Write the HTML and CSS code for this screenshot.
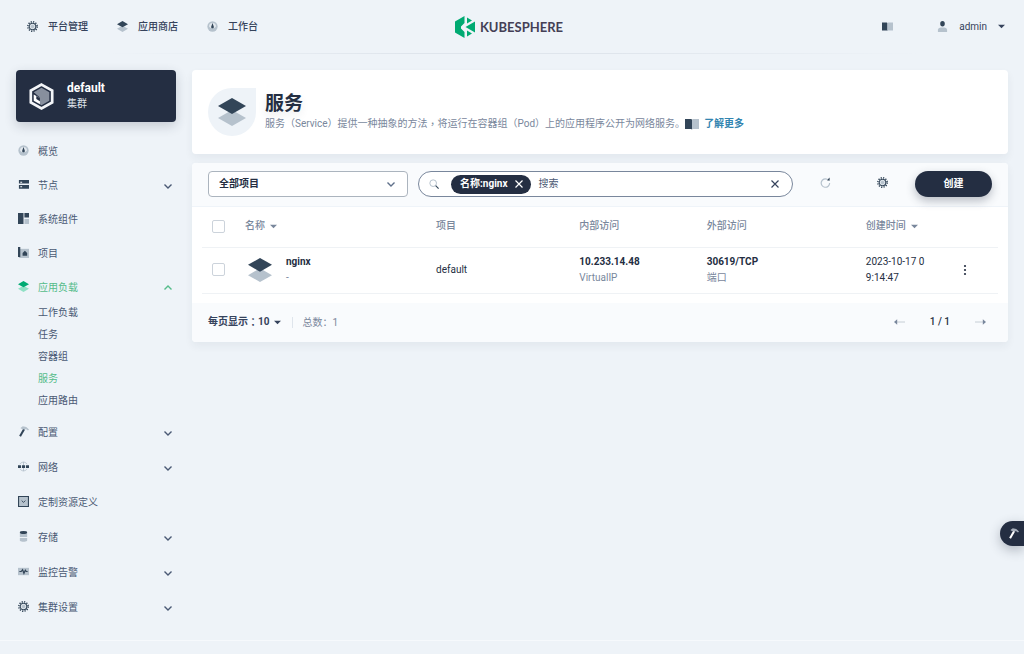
FILE: index.html
```html
<!DOCTYPE html>
<html lang="zh-CN">
<head>
<meta charset="utf-8">
<meta name="viewport" content="width=device-width, initial-scale=1">
<title>KubeSphere - 服务</title>
<link rel="stylesheet" href="styles.css">
</head>
<body>
<svg class="defs" aria-hidden="true">
  <symbol id="gear" viewBox="0 0 16 16"><circle cx="8" cy="8" r="6.8" fill="none" stroke="#324558" stroke-width="2.2" stroke-dasharray="1.8 1.76"/><circle cx="8" cy="8" r="4.800" fill="#dde4ea" stroke="#324558" stroke-width="1.600"/><circle cx="8" cy="8" r="2.400" fill="#b6c2cd"/></symbol>
  <symbol id="layers" viewBox="0 0 28 28"><path fill="var(--low, #b6c2cd)" d="M14 12l14 8-14 8-14-8z"/><path fill="var(--high, #324558)" d="M14 0l14 8-14 8-14-8z"/></symbol>
  <symbol id="dash" viewBox="0 0 16 16"><circle cx="8" cy="8" r="7.500" fill="#b6c2cd"/><path fill="#e3e9ef" d="M3 8a5 5 0 0 1 10 0l-2 2H5z"/><path fill="#324558" d="M8 3l1.700 4.500a2 2 0 1 1-3.400 0z"/></symbol>
  <symbol id="book" viewBox="0 0 14 12"><path fill="#324558" d="M0 1h6l1 .5v10L6 11H0z"/><path fill="#b6c2cd" d="M14 1H8l-1 .5v10l1-.5h6z"/></symbol>
  <symbol id="chevron" viewBox="0 0 10 10"><path d="M1.500 3.500L5 7l3.500-3.500" fill="none" stroke="currentColor" stroke-width="1.400"/></symbol>
  <symbol id="caret" viewBox="0 0 8 5"><path d="M0 0.500h8L4 4.500z" fill="currentColor"/></symbol>
  <symbol id="cross" viewBox="0 0 10 10"><path d="M1.500 1.500l7 7m0-7l-7 7" stroke="currentColor" stroke-width="1.200"/></symbol>
  <symbol id="hammer" viewBox="0 0 16 16"><path d="M3 15L9 4.500" stroke="var(--high, #324558)" stroke-width="3"/><path fill="var(--low, #b6c2cd)" d="M4 2.500L7 .5l5 1 4 3.500-1.500 1.500-3-2-2 1-5.500-2z"/></symbol>
</svg>

<header class="topbar">
  <nav class="topnav" aria-label="全局导航">
    <a href="#"><svg class="icon"><use href="#gear"/></svg>平台管理</a>
    <a href="#"><svg class="icon"><use href="#layers"/></svg>应用商店</a>
    <a href="#"><svg class="icon"><use href="#dash"/></svg>工作台</a>
  </nav>
  <a class="brand" href="#">
    <svg class="brand-mark" viewBox="0 0 20 22"><path fill="#00aa72" d="M9.500 0v7L6 10.500v2L9.500 16v6L0 16.500v-11zM12 1.500l5 3-5 3zM20 5.500v11L10.500 11zM12 14.500l5 3-5 3z"/></svg>
    <span>KUBESPHERE</span>
  </a>
  <div class="account">
    <a href="#" aria-label="文档"><svg class="icon"><use href="#book"/></svg></a>
    <button type="button" class="user"><svg class="icon" viewBox="0 0 12 12"><ellipse cx="6" cy="3" rx="2.500" ry="3" fill="#324558"/><path fill="#b6c2cd" d="M1 12V9.500C1 7.500 3 7 6 7s5 .5 5 2.500V12z"/></svg>admin<svg class="caret"><use href="#caret"/></svg></button>
  </div>
</header>

<div class="layout">
  <aside class="sidebar">
    <button type="button" class="cluster">
      <svg class="cluster-icon" viewBox="0 0 24 26"><path d="M12 1.500l10.300 5.800v11.400L12 24.500 1.700 18.700V7.300z" fill="none" stroke="#f3f5f8" stroke-width="2.600"/><path fill="#878f9d" d="M12 4.500l7.500 4.300v8.400L12 21.500l-1.500-1V14L4.500 9z"/><path fill="#fff" d="M4.500 11l6 3.500v6l-6-3.500z"/><path fill="#242e42" d="M7 12.500l3.500 2v3L7 15.500z"/></svg>
      <span><strong>default</strong><small>集群</small></span>
    </button>
    <nav aria-label="集群导航">
      <ul class="menu">
        <li><a href="#"><svg class="icon"><use href="#dash"/></svg><span>概览</span></a></li>
        <li><a href="#"><svg class="icon" viewBox="0 0 12 12"><path fill="#324558" d="M1 1h11v4H1zM1 6.500h11v4H1z"/><path fill="#fff" d="M2.500 3h2v1h-2zM2.500 8h2v1h-2z"/></svg><span>节点</span><svg class="chevron"><use href="#chevron"/></svg></a></li>
        <li><a href="#"><svg class="icon" viewBox="0 0 12 12"><path fill="#324558" d="M0 0h6v12H0zM7 0h5v5H7z"/><path fill="#b6c2cd" d="M7 6.500h5V12H7z"/></svg><span>系统组件</span></a></li>
        <li><a href="#"><svg class="icon" viewBox="0 0 12 12"><path fill="#b6c2cd" d="M1 2h11v10H1z"/><path fill="#324558" d="M0 0h2.500v11H0zM5 6.500L7.500 4 10 6.500V9.500H5z"/></svg><span>项目</span></a></li>
        <li class="open"><a href="#"><svg class="icon"><use href="#layers"/></svg><span>应用负载</span><svg class="chevron"><use href="#chevron"/></svg></a>
          <ul class="submenu">
            <li><a href="#">工作负载</a></li>
            <li><a href="#">任务</a></li>
            <li><a href="#">容器组</a></li>
            <li><a href="#" class="current" aria-current="page">服务</a></li>
            <li><a href="#">应用路由</a></li>
          </ul>
        </li>
      </ul>
      <ul class="menu menu-lower">
        <li><a href="#"><svg class="icon"><use href="#hammer"/></svg><span>配置</span><svg class="chevron"><use href="#chevron"/></svg></a></li>
        <li><a href="#"><svg class="icon" viewBox="0 0 12 12"><path fill="none" stroke="#b6c2cd" d="M2 3.500C4 .5 8 .5 10 3.500M2 8.500c2 3 6 3 8 0M6 1v10"/><path fill="#324558" d="M0 4.500h3.300v3H0zM4.300 4.500h3.400v3H4.300zM8.700 4.500H12v3H8.700z"/></svg><span>网络</span><svg class="chevron"><use href="#chevron"/></svg></a></li>
        <li><a href="#"><svg class="icon" viewBox="0 0 12 12"><path fill="#b6c2cd" stroke="#324558" stroke-width="1.200" d="M.6.6h10.800v10.800H.6z"/><path fill="none" stroke="#324558" d="M4 5l2 2 2-2"/></svg><span>定制资源定义</span></a></li>
        <li><a href="#"><svg class="icon" viewBox="0 0 12 12"><path fill="#b6c2cd" d="M2 2h8v4.500H2zM2 7.500h8v3c-2 1.500-6 1.500-8 0z"/><ellipse cx="6" cy="1.700" rx="4" ry="1.600" fill="#324558"/></svg><span>存储</span><svg class="chevron"><use href="#chevron"/></svg></a></li>
        <li><a href="#"><svg class="icon" viewBox="0 0 12 12"><path fill="#b6c2cd" d="M0 2h12v8H0z"/><path fill="none" stroke="#324558" stroke-width="1.300" d="M1.500 6h2L5 4l1.500 4L8 4.500 9 6h1.500"/></svg><span>监控告警</span><svg class="chevron"><use href="#chevron"/></svg></a></li>
        <li><a href="#"><svg class="icon"><use href="#gear"/></svg><span>集群设置</span><svg class="chevron"><use href="#chevron"/></svg></a></li>
      </ul>
    </nav>
  </aside>

  <main class="content">
    <section class="banner">
      <div class="banner-icon"><svg><use href="#layers"/></svg></div>
      <div>
        <h1>服务</h1>
        <p>服务（Service）提供一种抽象的方法<span class="mid">，</span>将运行在容器组（Pod）上的应用程序公开为网络服务。<a href="#"><svg><use href="#book"/></svg>了解更多</a></p>
      </div>
    </section>

    <section class="card">
      <div class="toolbar">
        <div class="project">
          <select aria-label="项目"><option>全部项目</option></select>
          <svg class="chevron"><use href="#chevron"/></svg>
        </div>
        <div class="search">
          <svg class="magnifier" viewBox="0 0 12 12"><circle cx="5" cy="5" r="4" fill="none" stroke="#b6c2cd" stroke-width="1.200"/><path d="M8 8l3.500 3.500" stroke="#324558" stroke-width="1.400"/></svg>
          <span class="tag">名称:nginx<button type="button" aria-label="移除条件"><svg><use href="#cross"/></svg></button></span>
          <input type="text" placeholder="搜索" aria-label="搜索">
          <button type="button" class="clear" aria-label="清空"><svg><use href="#cross"/></svg></button>
        </div>
        <div class="actions">
          <button type="button" class="tool refresh" aria-label="刷新"><svg viewBox="0 0 12 12"><path d="M10.500 6.500A4.600 4.600 0 1 1 8 2.500" fill="none" stroke="#b6c2cd" stroke-width="1.300"/><path fill="#324558" d="M7.500 3.500L10.500.5v3.500z"/></svg></button>
          <button type="button" class="tool" aria-label="设置"><svg><use href="#gear"/></svg></button>
          <button type="button" class="create">创建</button>
        </div>
      </div>

      <div class="table-wrap">
        <table>
          <colgroup><col class="c-check"><col class="c-name"><col class="c-project"><col class="c-inner"><col class="c-outer"><col class="c-time"><col></colgroup>
          <thead>
            <tr>
              <th><input type="checkbox" aria-label="全选"></th>
              <th>名称<svg class="caret"><use href="#caret"/></svg></th>
              <th>项目</th>
              <th>内部访问</th>
              <th>外部访问</th>
              <th>创建时间<svg class="caret"><use href="#caret"/></svg></th>
              <th></th>
            </tr>
          </thead>
          <tbody>
            <tr>
              <td><input type="checkbox" aria-label="选择 nginx"></td>
              <td><div class="name"><svg><use href="#layers"/></svg><div><a href="#">nginx</a><small>-</small></div></div></td>
              <td>default</td>
              <td><strong>10.233.14.48</strong><small>VirtualIP</small></td>
              <td><strong>30619/TCP</strong><small>端口</small></td>
              <td class="time">2023-10-17 09:14:47</td>
              <td><button type="button" class="more" aria-label="更多操作"><svg viewBox="0 0 12 12"><g fill="#242e42"><circle cx="6" cy="2" r="1.100"/><circle cx="6" cy="6" r="1.100"/><circle cx="6" cy="10" r="1.100"/></g></svg></button></td>
            </tr>
          </tbody>
        </table>
      </div>

      <footer class="pager">
        <button type="button" class="page-size">每页显示<span class="mid">：</span>10<svg class="caret"><use href="#caret"/></svg></button>
        <span class="total">总数<span class="mid">：</span>1</span>
        <div class="pages">
          <button type="button" aria-label="上一页"><svg viewBox="0 0 12 8"><path d="M3 4h9" stroke="#c1c9d1"/><path fill="#79879c" d="M0 4l3.500-3v6z"/></svg></button>
          <span>1 / 1</span>
          <button type="button" aria-label="下一页"><svg viewBox="0 0 12 8"><path d="M0 4h9" stroke="#c1c9d1"/><path fill="#79879c" d="M12 4L8.500 1v6z"/></svg></button>
        </div>
      </footer>
    </section>
  </main>
</div>
<div class="page-end"></div>
<button type="button" class="toolbox" aria-label="工具箱"><svg><use href="#hammer"/></svg></button>
</body>
</html>
```

FILE: styles.css
```css
* { box-sizing: border-box; }

body {
  margin: 0;
  min-height: 100vh;
  display: flex;
  flex-direction: column;
  background: #eef3f8;
  color: #242e42;
  font: 10px/16px Roboto, "Noto Sans CJK SC", sans-serif;
}

a { color: inherit; text-decoration: none; }
ul { list-style: none; margin: 0; padding: 0; }
svg { display: block; flex: none; }
button, input, select { font: inherit; color: inherit; }
button { border: 0; padding: 0; background: none; cursor: pointer; }
small { display: block; font-size: 10px; color: #79879c; }
strong { display: block; font-weight: 700; }

.defs { position: absolute; width: 0; height: 0; }
.icon { width: 11px; height: 11px; }
.caret { width: 7px; height: 5px; }
.chevron { width: 10px; height: 10px; }
.mid { font-family: "Noto Sans CJK TC", sans-serif; }

/* Top bar */
.topbar {
  display: grid;
  grid-template-columns: 1fr auto 1fr;
  align-items: center;
  height: 54px;
  padding: 0 19px 0 13px;
  border-bottom: 1px solid;
  border-image: linear-gradient(to right, #eef3f8 10%, #dfe5ec 40%, #dfe5ec 60%, #eef3f8 90%) 1;
}
.topnav { display: flex; gap: 29px; padding-left: 14px; color: #36435c; }
.topnav a { display: flex; align-items: center; gap: 10px; font-weight: 500; }
.brand {
  display: flex;
  align-items: center;
  gap: 5px;
  color: #443f56;
  font: 700 13px/22px Lato, sans-serif;
}
.brand-mark { width: 20px; height: 22px; }
.account { display: flex; justify-content: flex-end; align-items: center; gap: 44px; color: #36435c; }
.user { display: flex; align-items: center; gap: 11px; }

/* Page frame */
.layout {
  flex: 1;
  display: grid;
  grid-template-columns: 160px minmax(0, 1fr);
  gap: 16px;
  align-items: start;
  padding: 16px 16px 0;
}
.page-end { height: 14px; border-top: 1px solid #f6f9fc; }

/* Sidebar */
.cluster {
  display: flex;
  align-items: center;
  gap: 13px;
  width: 100%;
  height: 52px;
  padding: 0 13px;
  border-radius: 4px;
  background: #242e42;
  color: #fff;
  text-align: left;
  box-shadow: 0 4px 12px rgba(36, 46, 66, 0.2);
}
.cluster strong { font-size: 12px; }
.cluster small { color: #dfe3ea; }
.cluster-icon { width: 25px; height: 27px; }

.menu { display: grid; gap: 10px; padding: 17px 2px 0; color: #4a5974; }
.menu > li > a { display: flex; align-items: center; gap: 9px; height: 24px; }
.menu > li > a span { flex: 1; padding-top: 1px; }
.menu .icon { margin-bottom: 2px; }
.menu .chevron { margin: 2px 1px 0; }
.menu-lower { gap: 11px; padding-top: 0; }
.open > a { color: #55bc8a; --high: #00aa72; --low: #90e0c5; }
.open > a .chevron { transform: rotate(180deg); }
.submenu { padding: 3px 0 8px 20px; }
.submenu a { display: block; line-height: 22px; }
.submenu .current { color: #55bc8a; }

/* Banner */
.banner {
  display: flex;
  align-items: center;
  gap: 9px;
  height: 84px;
  margin-bottom: 9px;
  padding: 0 16px;
  border-radius: 4px;
  background: #fff;
  box-shadow: 0 4px 8px rgba(36, 46, 66, 0.06);
}
.banner-icon {
  display: grid;
  place-items: center;
  width: 48px;
  height: 48px;
  border-radius: 50% 0 50% 50%;
  background: #eef3f8;
}
.banner-icon svg { width: 28px; height: 28px; }
.banner h1 {
  margin: 0;
  font-size: 19px;
  line-height: 24px;
  text-shadow: 0 4px 8px rgba(36, 46, 66, 0.1);
}
.banner p { display: flex; align-items: center; margin: 0; color: #79879c; }
.banner a { display: flex; align-items: center; gap: 5px; color: #3385b0; font-weight: 700; }
.banner a svg { width: 14px; height: 12px; }

/* List card */
.card {
  border-radius: 4px;
  background: #fff;
  box-shadow: 0 4px 8px rgba(36, 46, 66, 0.06);
}
.toolbar {
  display: flex;
  align-items: center;
  gap: 10px;
  padding: 8px 16px 9px;
  border-bottom: 1px solid #eff4f9;
  border-radius: 4px 4px 0 0;
  background: #f9fbfd;
}
.project { display: grid; align-items: center; flex: 0 1 200px; }
.project select {
  grid-area: 1 / 1;
  appearance: none;
  width: 100%;
  height: 26px;
  padding: 0 10px;
  border: 1px solid #abb4be;
  border-radius: 4px;
  background: #fff;
  font-weight: 700;
}
.project .chevron { grid-area: 1 / 1; justify-self: end; margin-right: 12px; color: #5f708a; pointer-events: none; }
.search {
  display: flex;
  align-items: center;
  flex: 1;
  min-width: 0;
  height: 26px;
  padding: 0 12px 0 10px;
  border: 1px solid #79879c;
  border-radius: 13px;
  background: #fff;
}
.magnifier { width: 10px; height: 10px; }
.tag {
  display: flex;
  align-items: center;
  gap: 7px;
  height: 19px;
  margin-left: 12px;
  padding: 0 7px 0 9px;
  border-radius: 10px;
  background: #242e42;
  color: #fff;
  font-weight: 700;
  white-space: nowrap;
}
.tag svg, .clear svg { width: 10px; height: 10px; }
.search input { flex: 1; min-width: 0; padding: 0 7px; border: 0; outline: 0; background: none; }
.search input::placeholder { color: #4a5974; opacity: 1; }
.clear { color: #36435c; }
.actions { display: flex; align-items: center; gap: 27px; padding-left: 17px; }
.tool, .tool svg { width: 11px; height: 11px; }
.tool { margin-bottom: 3px; }
.refresh { margin-right: 19px; }
.create {
  width: 77px;
  height: 26px;
  border-radius: 13px;
  background: #242e42;
  color: #fff;
  font-weight: 700;
  box-shadow: 0 4px 10px rgba(36, 46, 66, 0.3);
}

.table-wrap { padding: 0 10px 9px; }
table { width: 100%; table-layout: fixed; border-collapse: collapse; text-align: left; }
.c-check { width: 33px; }
.c-name { width: 24%; }
.c-project { width: 18%; }
.c-inner { width: 16%; }
.c-outer { width: 20%; }
.c-time { width: 10%; }
th, td { padding: 0 10px 1px; border-bottom: 1px solid #eff2f5; }
th { height: 40px; padding-right: 0; color: #79879c; font-weight: 500; }
td { height: 46px; }
th .caret { display: inline-block; margin-left: 5px; vertical-align: middle; }
table input {
  appearance: none;
  display: block;
  width: 13px;
  height: 13px;
  margin: 0;
  border: 1px solid #ccd3db;
  border-radius: 2px;
  background: #fff;
}
.name { display: flex; align-items: center; gap: 14px; padding-left: 3px; }
.name svg { width: 24px; height: 24px; }
.name a { font-weight: 700; }
.time { word-break: break-all; }
.more { display: block; width: 20px; height: 20px; margin-left: 10px; padding: 4px; }

.pager {
  display: flex;
  align-items: center;
  height: 39px;
  padding: 0 22px 0 16px;
  border-radius: 0 0 4px 4px;
  background: #f9fbfd;
}
.page-size { display: flex; align-items: center; color: #36435c; font-weight: 700; }
.page-size .caret { margin-left: 5px; }
.total { margin-left: 11px; padding-left: 9px; border-left: 1px solid #dfe5ec; line-height: 10px; color: #79879c; }
.pages { display: flex; align-items: center; gap: 25px; margin-left: auto; font-weight: 500; }
.pages svg { width: 11px; height: 8px; }

/* Floating toolbox handle */
.toolbox {
  position: fixed;
  right: 0;
  bottom: 108px;
  width: 24px;
  height: 25px;
  padding-left: 8px;
  border-radius: 13px 0 0 13px;
  background: #242e42;
  box-shadow: 0 4px 12px rgba(36, 46, 66, 0.3);
  --high: #fff;
  --low: #a5adb9;
}
.toolbox svg { width: 11px; height: 11px; }
```
